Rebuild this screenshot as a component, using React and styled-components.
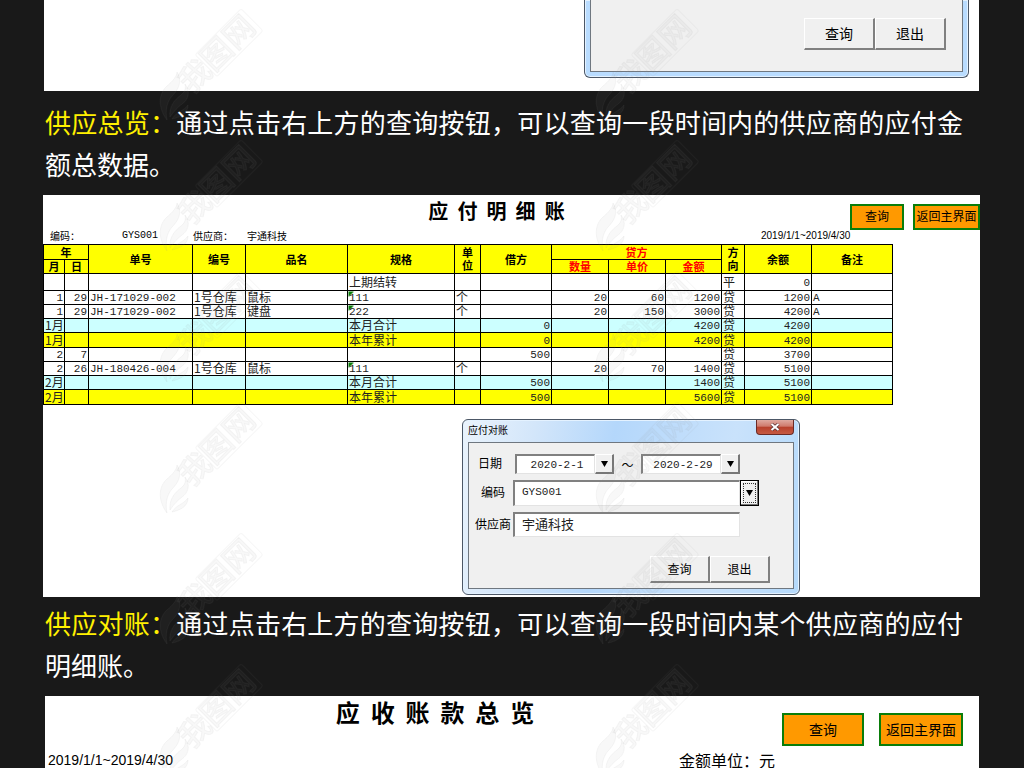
import React from "react";
import styled, { createGlobalStyle, css } from "styled-components";

const sans = '"Liberation Sans", "Noto Sans CJK SC", sans-serif';
const cjk = '"Noto Sans CJK SC", "Liberation Sans", sans-serif';
const mono = '"Liberation Mono", "Noto Sans CJK SC", monospace';

const GlobalStyle = createGlobalStyle`
  * { box-sizing: border-box; }
  body { margin: 0; background: #191919; color: #000; font-family: ${cjk}; }
  button, input { font: inherit; color: inherit; margin: 0; }
`;

const Page = styled.main`
  position: relative;
  padding: 0 45px 0 44px;
  overflow: hidden;
`;

const Panel = styled.section`
  background: #fff;
`;

const TopPanel = styled(Panel)`
  padding-bottom: 13px;
`;

const LedgerPanel = styled(Panel)`
  margin: 0 -1px;
  padding-bottom: 2px;
`;

const SummaryPanel = styled(Panel)`
  margin-left: 1px;
`;

const Caption = styled.p`
  margin: ${(p) => (p.$late ? "5px" : "10px")} 16px 10px 1px;
  font-size: 26px;
  line-height: 42px;
  color: #fff;
  text-align: justify;
`;

const Lead = styled.span`
  color: #fff000;
`;

const Window = styled.div`
  width: ${(p) => p.$width}px;
  margin-left: ${(p) => p.$left}px;
  margin-top: ${(p) => (p.$open ? 0 : 14)}px;
  padding: 0 5px 5px;
  border: 1px solid #4c5766;
  border-top-width: ${(p) => (p.$open ? 0 : 1)}px;
  border-radius: ${(p) => (p.$open ? "0 0 6px 6px" : "6px")};
  box-shadow: inset 0 0 0 1px #e4f2ff;
  background: ${(p) =>
    p.$open
      ? "#b9dcff"
      : "linear-gradient(100deg, #eaf3fc 0, #d3e6fa 20%, #b4d7fb 42%, #c9e2fb 75%, #b4d9fb 100%)"};
`;

const TitleBar = styled.header`
  display: flex;
  justify-content: space-between;
  align-items: flex-start;
  height: 22px;
  font-size: 10px;
  line-height: 20px;
`;

const CloseButton = styled.button`
  display: grid;
  place-items: center;
  width: 38px;
  height: 15px;
  padding: 0;
  border: 1px solid #6b2a25;
  border-top: 0;
  border-radius: 0 0 4px 4px;
  background: linear-gradient(#dfa9a0 0, #cf7a6c 45%, #b7402c 50%, #c65a42 100%);
`;

const WindowBody = styled.div`
  border: 1px solid #6f7780;
  background: #f0f0f0;
`;

const OpenBody = styled(WindowBody)`
  border-top: 0;
  padding: 18px 16px 21px;
`;

const FormBody = styled(WindowBody)`
  padding: 11px 23px 5px 6px;
  font-size: 12px;
`;

const Field = styled.div`
  display: flex;
  align-items: center;
  height: ${(p) => p.$height}px;
  margin-bottom: 6px;
`;

const FieldLabel = styled.label`
  width: ${(p) => p.$width}px;
  padding-left: ${(p) => p.$indent || 0}px;
  line-height: 16px;
  padding-bottom: 2px;
  white-space: nowrap;
`;

const TextBox = styled.input`
  width: ${(p) => p.$width}px;
  height: 100%;
  padding: ${(p) => (p.$center ? "0 7px 0 10px" : "0 7px 4px 7px")};
  border: 1px solid;
  border-width: 2px 1px 1px 2px;
  border-color: #808080 #e3e3e3 #e3e3e3 #808080;
  background: #fff;
  color: #222;
  font-family: ${mono};
  font-size: ${(p) => p.$size || 11}px;
  line-height: 16px;
  text-align: ${(p) => (p.$center ? "center" : "left")};
`;

const DropButton = styled.button`
  display: grid;
  place-items: center;
  width: 19px;
  height: 100%;
  padding: 0;
  border: 1px solid;
  border-width: 1px 2px 2px 1px;
  border-color: #fff #777 #777 #fff;
  background: #f0f0f0;
  ${(p) =>
    p.$focused &&
    css`
      border: 1px solid #000;
      box-shadow: inset -1px -1px 0 #777, inset 1px 1px 0 #fff;
      outline: 1px dotted #333;
      outline-offset: -4px;
    `}
`;

const Tilde = styled.span`
  width: 27px;
  text-align: center;
`;

const Actions = styled.div`
  display: flex;
  justify-content: flex-end;
  margin-top: ${(p) => p.$gap || 0}px;
`;

const GrayButton = styled.button`
  width: ${(p) => (p.$large ? 71 : 60)}px;
  height: ${(p) => (p.$large ? 32 : 27)}px;
  padding: 0 0 1px;
  border: 1px solid;
  border-width: 1px 2px 2px 1px;
  border-color: #fff #808080 #808080 #fff;
  background: #f0f0f0;
  font-size: ${(p) => (p.$large ? 14 : 12)}px;
`;

const SheetHeader = styled.header`
  display: flex;
  align-items: flex-start;
  justify-content: space-between;
`;

const SheetTitle = styled.h2`
  flex: 1;
  margin: 0;
  padding-left: ${(p) => p.$indent}px;
  font-size: ${(p) => (p.$large ? 24 : 20)}px;
  line-height: 32px;
  font-weight: 700;
  text-align: center;
  white-space: pre;
`;

const ButtonPair = styled.div`
  display: flex;
  align-items: flex-start;
  gap: ${(p) => (p.$large ? 15 : 9)}px;
  padding: ${(p) => (p.$large ? "17px 16px 0 0" : "9px 0 0")};
`;

const OrangeButton = styled.button`
  width: ${(p) => p.$width}px;
  height: ${(p) => (p.$large ? 33 : 26)}px;
  padding: 0 0 2px;
  border: 2px solid #0a7d0a;
  background: #ff9900;
  font-size: ${(p) => (p.$large ? 14 : 12)}px;
  line-height: 16px;
  white-space: nowrap;
`;

const LedgerInfo = styled.div`
  display: grid;
  grid-template-columns: 72px 71px 54px 514px auto;
  padding: 0 0 2px 7px;
  font-size: 10px;
  line-height: 12px;
`;

const Code = styled.span`
  font-family: ${mono};
`;

const Period = styled.time`
  font-family: ${sans};
  font-size: ${(p) => (p.$large ? 14 : 10)}px;
`;

const Ledger = styled.table`
  width: 849px;
  table-layout: fixed;
  border-collapse: collapse;
  font-size: 12px;
  line-height: 13px;
`;

const HeadCell = styled.th`
  padding: 0;
  border: 1px solid #000;
  background: #ffff00;
  color: ${(p) => (p.$credit ? "#ff0000" : "#000")};
  font-size: 11px;
  font-weight: 700;
`;

const rowColors = { month: "#ccffff", year: "#ffff00", plain: "#ffffff" };

const Row = styled.tr`
  height: ${(p) => p.$height}px;
  background: ${(p) => rowColors[p.$kind || "plain"]};
`;

const Cell = styled.td`
  padding: 0 1px 2px;
  border: 1px solid #000;
  white-space: nowrap;
  color: #222;
  line-height: 11px;
  text-align: ${(p) => (p.$right ? "right" : "left")};
  ${(p) =>
    p.$latin &&
    css`
      padding: 1px 1px 0;
      font-family: ${mono};
      font-size: 11px;
      line-height: 12px;
    `}
  ${(p) =>
    p.$flagged &&
    css`
      background: linear-gradient(135deg, #0a7d0a 4px, transparent 4px);
    `}
`;

const SummaryInfo = styled.div`
  display: grid;
  grid-template-columns: 631px auto;
  align-items: center;
  padding: 6px 0 0 3px;
  font-size: 16px;
  line-height: 16px;
`;

const WatermarkLayer = styled.svg`
  position: absolute;
  inset: 0;
  width: 100%;
  height: 100%;
  pointer-events: none;
`;

const columns = [21, 24, 104, 53, 102, 107, 26, 71, 57, 57, 56, 23, 67, 81];
const rightAligned = new Set([0, 1, 7, 8, 9, 10, 12]);

const rows = [
  { height: 17, cells: ["", "", "", "", "", "上期结转", "", "", "", "", "", "平", "0", ""] },
  { height: 14, cells: ["1", "29", "JH-171029-002", "1号仓库", "鼠标", "111", "个", "", "20", "60", "1200", "贷", "1200", "A"] },
  { height: 14, cells: ["1", "29", "JH-171029-002", "1号仓库", "键盘", "222", "个", "", "20", "150", "3000", "贷", "4200", "A"] },
  { height: 14, kind: "month", cells: ["1月", "", "", "", "", "本月合计", "", "0", "", "", "4200", "贷", "4200", ""] },
  { height: 15, kind: "year", cells: ["1月", "", "", "", "", "本年累计", "", "0", "", "", "4200", "贷", "4200", ""] },
  { height: 14, cells: ["2", "7", "", "", "", "", "", "500", "", "", "", "贷", "3700", ""] },
  { height: 14, cells: ["2", "26", "JH-180426-004", "1号仓库", "鼠标", "111", "个", "", "20", "70", "1400", "贷", "5100", ""] },
  { height: 14, kind: "month", cells: ["2月", "", "", "", "", "本月合计", "", "500", "", "", "1400", "贷", "5100", ""] },
  { height: 15, kind: "year", cells: ["2月", "", "", "", "", "本年累计", "", "500", "", "", "5600", "贷", "5100", ""] },
];

function Arrow() {
  return (
    <svg width="7" height="6" viewBox="0 0 7 6" aria-hidden="true">
      <path d="M0 0H7L3.5 6Z" fill="#000" />
    </svg>
  );
}

function LedgerTable() {
  return (
    <Ledger>
      <colgroup>
        {columns.map((w, i) => (
          <col key={i} width={w} />
        ))}
      </colgroup>
      <thead>
        <Row $height={15}>
          <HeadCell colSpan={2}>年</HeadCell>
          <HeadCell rowSpan={2}>单号</HeadCell>
          <HeadCell rowSpan={2}>编号</HeadCell>
          <HeadCell rowSpan={2}>品名</HeadCell>
          <HeadCell rowSpan={2}>规格</HeadCell>
          <HeadCell rowSpan={2}>单<br />位</HeadCell>
          <HeadCell rowSpan={2}>借方</HeadCell>
          <HeadCell colSpan={3} $credit>贷方</HeadCell>
          <HeadCell rowSpan={2}>方<br />向</HeadCell>
          <HeadCell rowSpan={2}>余额</HeadCell>
          <HeadCell rowSpan={2}>备注</HeadCell>
        </Row>
        <Row $height={14}>
          <HeadCell>月</HeadCell>
          <HeadCell>日</HeadCell>
          <HeadCell $credit>数量</HeadCell>
          <HeadCell $credit>单价</HeadCell>
          <HeadCell $credit>金额</HeadCell>
        </Row>
      </thead>
      <tbody>
        {rows.map((row, r) => (
          <Row key={r} $height={row.height} $kind={row.kind}>
            {row.cells.map((text, c) => (
              <Cell
                key={c}
                $right={rightAligned.has(c) && !text.endsWith("月")}
                $latin={/^[\w-]+$/.test(text)}
                $flagged={c === 5 && /^\d+$/.test(text)}
              >
                {text}
              </Cell>
            ))}
          </Row>
        ))}
      </tbody>
    </Ledger>
  );
}

function QueryWindow() {
  return (
    <Window $width={338} $left={419}>
      <TitleBar>
        应付对账
        <CloseButton aria-label="关闭">
          <svg width="10" height="8" viewBox="0 0 10 8" aria-hidden="true">
            <path d="M1.5 1L8.5 7M8.5 1L1.5 7" stroke="#5b3030" strokeWidth="3.4" />
            <path d="M1.5 1L8.5 7M8.5 1L1.5 7" stroke="#fff" strokeWidth="2" />
          </svg>
        </CloseButton>
      </TitleBar>
      <FormBody>
        <Field $height={20}>
          <FieldLabel $width={40} $indent={3} htmlFor="from">日期</FieldLabel>
          <TextBox id="from" $width={80} $center defaultValue="2020-2-1" />
          <DropButton aria-label="选择开始日期"><Arrow /></DropButton>
          <Tilde>～</Tilde>
          <TextBox aria-label="结束日期" $width={80} $center defaultValue="2020-2-29" />
          <DropButton aria-label="选择结束日期"><Arrow /></DropButton>
        </Field>
        <Field $height={26}>
          <FieldLabel $width={38} $indent={6} htmlFor="code">编码</FieldLabel>
          <TextBox id="code" $width={227} defaultValue="GYS001" />
          <DropButton $focused aria-label="选择编码"><Arrow /></DropButton>
        </Field>
        <Field $height={25}>
          <FieldLabel $width={38} htmlFor="supplier">供应商</FieldLabel>
          <TextBox id="supplier" $width={227} $size={13} defaultValue="宇通科技" />
        </Field>
        <Actions $gap={19}>
          <GrayButton>查询</GrayButton>
          <GrayButton>退出</GrayButton>
        </Actions>
      </FormBody>
    </Window>
  );
}

function Watermarks() {
  return (
    <WatermarkLayer aria-hidden="true">
      <defs>
        <pattern id="mark" x="150" y="4" width="436" height="131" patternUnits="userSpaceOnUse">
          <g fill="#808080" fillOpacity="0.06" stroke="#808080" strokeOpacity="0.07">
            <path d="M17 116C8 104 8 90 17 82C23 77 27 72 27 68C33 78 28 86 22 92C17 98 15 106 17 116Z" />
            <path d="M20 113C19 103 24 96 31 91C35 88 36 84 35 80C41 88 38 96 32 100C28 103 24 107 20 113Z" />
            <path d="M22 115C26 108 34 107 38 101C38 109 31 113 22 115Z" />
            <g transform="translate(67 50) rotate(-45)">
              <rect x="-16" y="-15" width="65" height="31" rx="2" fill="none" />
              <text
                x="0"
                y="11"
                textAnchor="middle"
                fontFamily={cjk}
                fontSize="31"
                fontWeight="500"
              >
                我图网
              </text>
            </g>
          </g>
        </pattern>
      </defs>
      <rect width="100%" height="100%" fill="url(#mark)" />
    </WatermarkLayer>
  );
}

export default function App() {
  return (
    <Page>
      <GlobalStyle />
      <TopPanel>
        <Window $width={385} $left={540} $open>
          <OpenBody>
            <Actions>
              <GrayButton $large>查询</GrayButton>
              <GrayButton $large>退出</GrayButton>
            </Actions>
          </OpenBody>
        </Window>
      </TopPanel>

      <Caption>
        <Lead>供应总览：</Lead>
        通过点击右上方的查询按钮，可以查询一段时间内的供应商的应付金额总数据。
      </Caption>

      <LedgerPanel>
        <SheetHeader>
          <SheetTitle $indent={100}>应  付  明  细  账</SheetTitle>
          <ButtonPair>
            <OrangeButton $width={54}>查询</OrangeButton>
            <OrangeButton $width={67}>返回主界面</OrangeButton>
          </ButtonPair>
        </SheetHeader>
        <LedgerInfo>
          <span>编码：</span>
          <Code>GYS001</Code>
          <span>供应商：</span>
          <span>宇通科技</span>
          <Period>2019/1/1~2019/4/30</Period>
        </LedgerInfo>
        <LedgerTable />
        <QueryWindow />
      </LedgerPanel>

      <Caption $late>
        <Lead>供应对账：</Lead>
        通过点击右上方的查询按钮，可以查询一段时间内某个供应商的应付明细账。
      </Caption>

      <SummaryPanel>
        <SheetHeader>
          <SheetTitle $large $indent={43}>应  收  账  款  总  览</SheetTitle>
          <ButtonPair $large>
            <OrangeButton $large $width={82}>查询</OrangeButton>
            <OrangeButton $large $width={84}>返回主界面</OrangeButton>
          </ButtonPair>
        </SheetHeader>
        <SummaryInfo>
          <Period $large>2019/1/1~2019/4/30</Period>
          <span>金额单位：元</span>
        </SummaryInfo>
      </SummaryPanel>

      <Watermarks />
    </Page>
  );
}
